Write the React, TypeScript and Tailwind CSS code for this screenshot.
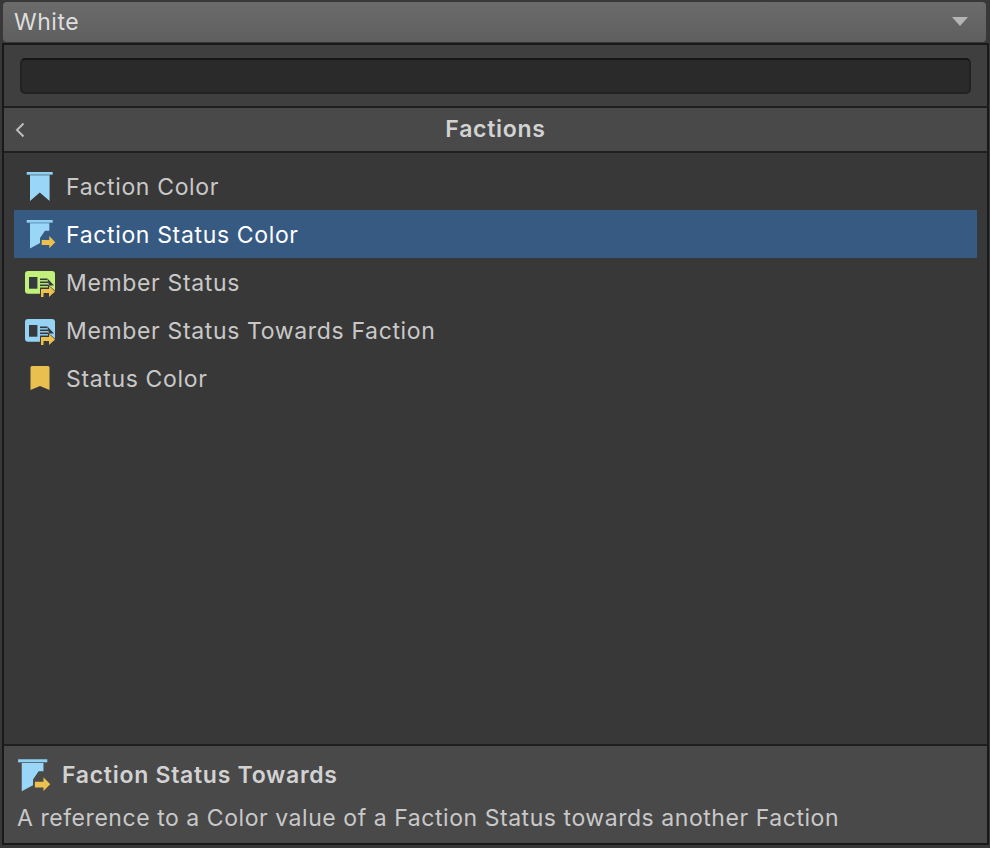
import React from "react";

const Ribbon = ({ cls = "" }: { cls?: string }) => (
  <svg viewBox="0 0 32 32" className={cls}>
    <rect x="2.7" y="2" width="26" height="2.7" fill="#8fd0f3" />
    <path d="M6 5.3H25.6V31L15.8 22.5L6 31Z" fill="#9ad6f8" />
  </svg>
);

const RibbonArrow = ({ cls = "" }: { cls?: string }) => (
  <svg viewBox="0 0 32 32" className={cls}>
    <rect x="2.7" y="2" width="26" height="2.7" fill="#8fd0f3" />
    <path d="M6 5.3H25.3V12.7H21L16 20V25L6 30.5Z" fill="#9ad6f8" />
    <path d="M17.7 22H25.3V18L31.3 24.3L25.3 30.3V27H17.7Z" fill="#ecc04e" />
  </svg>
);

const Card = ({ color, cls = "" }: { color: string; cls?: string }) => (
  <svg viewBox="0 0 31 28" className={cls}>
    <rect x="0" y="0" width="30" height="22.7" rx="3" fill={color} />
    <rect x="4" y="6" width="8.4" height="11.7" fill="#343a3d" />
    <rect x="15" y="7.5" width="7" height="1.6" fill="#343a3d" />
    <rect x="15" y="10.5" width="8" height="1.6" fill="#343a3d" />
    <rect x="15" y="13.5" width="8" height="1.6" fill="#343a3d" />
    <path d="M22 7L29 14.5H24Z" fill="#343a3d" />
    <path d="M15 16.5H23V13.5L31 20.5L23 27.5V23.5H19.5V27H15Z" fill="#383838" />
    <path d="M16 18H24V15L30 20.5L24 26V22H18.5V26H16Z" fill="#ecc04e" />
  </svg>
);

const Bookmark = ({ cls = "" }: { cls?: string }) => (
  <svg viewBox="0 0 20 24" className={cls}>
    <path d="M0.5 1.5Q0.5 0 2 0H18Q19.5 0 19.5 1.5V24L10 20L0.5 24Z" fill="#e9c04f" />
  </svg>
);

const rows = [
  { label: "Faction Color", icon: <Ribbon cls="h-8 w-8" /> },
  { label: "Faction Status Color", icon: <RibbonArrow cls="h-8 w-8" />, selected: true },
  { label: "Member Status", icon: <Card color="#c2f17b" cls="mt-[6px] h-7 w-[31px]" /> },
  { label: "Member Status Towards Faction", icon: <Card color="#95d2f4" cls="mt-[6px] h-7 w-[31px]" /> },
  { label: "Status Color", icon: <Bookmark cls="h-6 w-5" /> },
];

export default function App() {
  return (
    <div className="h-[848px] w-[990px] overflow-hidden bg-[#383838] pt-[2px] font-['Inter',sans-serif] text-[23px] tracking-[0.55px] text-[#c8c8c8]">
      <div className="ml-[3px] mr-[4px] flex h-10 items-center justify-between rounded-[4px] bg-gradient-to-b from-[#6b6b6b] to-[#5f5f5f] pl-[11px] pr-[18px] text-[#dedede]">
        <span>White</span>
        <svg viewBox="0 0 16 10" className="h-[10px] w-4"><path d="M0 0H16L8 9Z" fill="#b4b4b4" /></svg>
      </div>
      <div className="ml-[2px] mr-[1px] mt-[1px] flex h-[802px] flex-col border-2 border-[#191919]">
        <div className="flex h-[63px] items-center border-b-2 border-[#1f1f1f] bg-[#3f3f3f] px-4">
          <div className="h-9 w-[951px] rounded-[5px] border-2 border-x-[#222222] border-b-[#222222] border-t-[#161616] bg-[#2a2a2a]" />
        </div>
        <div className="relative flex h-[45px] items-center justify-center border-b-2 border-[#1f1f1f] bg-[#494949] font-semibold tracking-[0.72px]">
          <svg viewBox="0 0 10 16" className="absolute left-[11px] top-[14px] h-4 w-[10px]"><path d="M8.5 1.5L2 8L8.5 14.5" fill="none" stroke="#bdbdbd" strokeWidth="2" /></svg>
          <span className="text-[#d2d2d2]">Factions</span>
        </div>
        <div className="flex-1 bg-[#383838] px-[10px] pt-[9px] tracking-[0.65px]">
          {rows.map((r) => (
            <div key={r.label} className={`flex h-12 w-[963px] items-center ${r.selected ? "bg-[#375a83] text-white" : ""}`}>
              <div className="flex w-[52px] shrink-0 items-center justify-center">{r.icon}</div>
              <span className="pt-[2px]">{r.label}</span>
            </div>
          ))}
        </div>
        <div className="h-[99px] border-t-2 border-[#1f1f1f] bg-[#494949] pl-[13px]">
          <div className="flex h-[55px] items-center pt-[4px]">
            <RibbonArrow cls="ml-[-2px] mt-[-2px] h-[36px] w-[36px] shrink-0" />
            <span className="ml-[11px] font-semibold tracking-[0.72px] text-[#d2d2d2]">Faction Status Towards</span>
          </div>
          <div className="text-[#c8c8c8]">A reference to a Color value of a Faction Status towards another Faction</div>
        </div>
      </div>
    </div>
  );
}
